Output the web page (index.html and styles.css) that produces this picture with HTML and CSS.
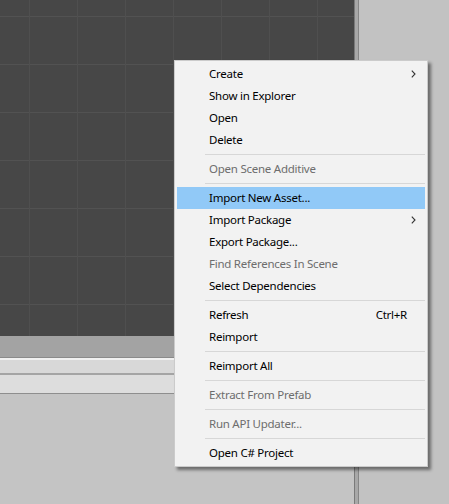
FILE: index.html
```html
<!DOCTYPE html>
<html>
<head>
<meta charset="utf-8">
<link rel="stylesheet" href="styles.css">
</head>
<body>
<div class="app">
  <div class="left">
    <div class="scene"></div>
    <div class="toolbar"></div>
    <div class="tabs">
      <div class="tab-light"></div>
      <div class="tab-row"></div>
    </div>
    <div class="panel"></div>
  </div>
  <div class="splitter"></div>
  <div class="right"></div>
</div>

<div class="menu">
  <div class="item"><span class="label">Create</span><span class="sc"></span><span class="arrow"><svg width="5" height="8" viewBox="0 0 5 8"><path d="M0.8 0.6 L4 4 L0.8 7.4" fill="none" stroke="#333" stroke-width="1.1"/></svg></span></div>
  <div class="item"><span class="label">Show in Explorer</span></div>
  <div class="item"><span class="label">Open</span></div>
  <div class="item"><span class="label">Delete</span></div>
  <div class="sep"></div>
  <div class="item dis"><span class="label">Open Scene Additive</span></div>
  <div class="sep"></div>
  <div class="item hot"><span class="label">Import New Asset...</span></div>
  <div class="item"><span class="label">Import Package</span><span class="sc"></span><span class="arrow"><svg width="5" height="8" viewBox="0 0 5 8"><path d="M0.8 0.6 L4 4 L0.8 7.4" fill="none" stroke="#333" stroke-width="1.1"/></svg></span></div>
  <div class="item"><span class="label">Export Package...</span></div>
  <div class="item dis"><span class="label">Find References In Scene</span></div>
  <div class="item"><span class="label">Select Dependencies</span></div>
  <div class="sep"></div>
  <div class="item"><span class="label">Refresh</span><span class="sc">Ctrl+R</span></div>
  <div class="item"><span class="label">Reimport</span></div>
  <div class="sep"></div>
  <div class="item"><span class="label">Reimport All</span></div>
  <div class="sep"></div>
  <div class="item dis"><span class="label">Extract From Prefab</span></div>
  <div class="sep"></div>
  <div class="item dis"><span class="label">Run API Updater...</span></div>
  <div class="sep"></div>
  <div class="item"><span class="label">Open C# Project</span></div>
</div>
</body>
</html>
```
FILE: styles.css
```css
html, body {
  margin: 0;
  padding: 0;
}
body {
  width: 449px;
  height: 504px;
  overflow: hidden;
  background: #c2c2c2;
  font-family: "Noto Sans", "Open Sans", sans-serif;
  position: relative;
}
.app {
  display: grid;
  grid-template-columns: 354px 5px 1fr;
  height: 504px;
}
.left {
  display: flex;
  flex-direction: column;
}
.scene {
  height: 336px;
  background-color: #474747;
  background-image:
    linear-gradient(to right, #4f4f4f 1px, transparent 1px),
    linear-gradient(to bottom, #525252 1px, transparent 1px);
  background-size: 48px 48px;
  background-position: 29px 16px;
}
.toolbar {
  height: 21px;
  background: #a3a3a3;
  border-bottom: 1px solid #8a8a8a;
}
.tabs {
  border-top: 2px solid #f0f0f0;
}
.tab-light {
  height: 13px;
  background: #d8d8d8;
  border-bottom: 2px solid #a4a4a4;
}
.tab-row {
  height: 18px;
  background: #dddddd;
  border-bottom: 1px solid #8e8e8e;
}
.panel {
  flex: 1;
  background: #c4c4c4;
}
.splitter {
  background: #a8a8a8;
  border-left: 1px solid #7a7a7a;
  border-right: 1px solid #868686;
  box-sizing: border-box;
}
.right {
  background: #c2c2c2;
}
.menu {
  position: absolute;
  left: 174px;
  top: 60px;
  width: 254px;
  box-sizing: border-box;
  background: #f2f2f2;
  border: 1px solid #cbcbcb;
  padding: 2px 2px;
  box-shadow: 3px 3px 3px rgba(0, 0, 0, 0.45);
  font-size: 11.5px;
  letter-spacing: -0.25px;
  color: #000;
}
.item {
  display: grid;
  grid-template-columns: 1fr auto 18px;
  align-items: center;
  height: 22px;
  padding-left: 32px;
  line-height: 22px;
}
.item.hot {
  background: #91c9f7;
}
.item.dis {
  color: #6d6d6d;
}
.sc {
  text-align: right;
}
.arrow {
  display: flex;
  align-items: center;
  padding-left: 4px;
}
.arrow svg {
  display: block;
}
.sep {
  height: 1px;
  margin: 3px 0 3px 28px;
  background: #d7d7d7;
}
```
